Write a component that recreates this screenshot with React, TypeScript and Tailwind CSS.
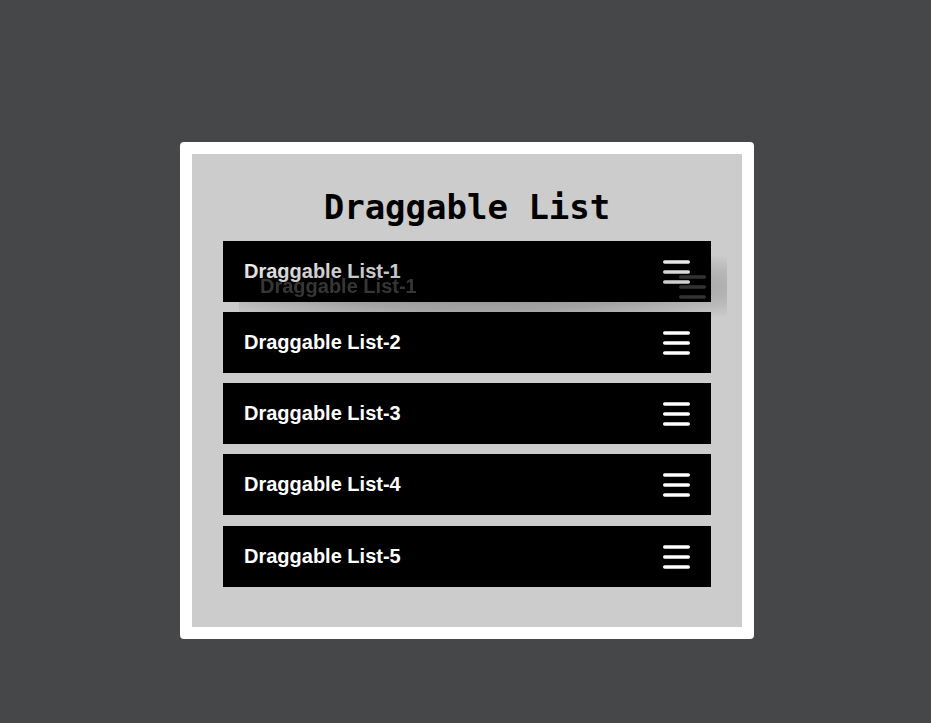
const items = ['Draggable List-1', 'Draggable List-2', 'Draggable List-3', 'Draggable List-4', 'Draggable List-5'];

function Bars({ color }: { color: string }) {
  return (
    <svg width="27" height="24" viewBox="0 0 27 24" fill="none">
      <g stroke={color} strokeWidth="3.4" strokeLinecap="round">
        <line x1="1.7" y1="2" x2="25.3" y2="2" />
        <line x1="1.7" y1="12" x2="25.3" y2="12" />
        <line x1="1.7" y1="22" x2="25.3" y2="22" />
      </g>
    </svg>
  );
}

function Row({ label, dragging, last }: { label: string; dragging?: boolean; last?: boolean }) {
  return (
    <div className={`relative h-[61px] bg-black flex items-center justify-between pl-[21px] pr-[21px] ${last ? 'mt-[1px]' : ''}`}>
      <span className="text-white text-[20px] leading-[22px] font-bold font-['Liberation_Sans',Arial,sans-serif] -mt-[2px]">{label}</span>
      <Bars color="#ffffff" />
      {dragging && (
        // ghost copy left behind by the drag
        <div className="absolute left-[16px] top-[15px] w-full h-[61px] flex items-center justify-between pl-[21px] pr-[21px] pointer-events-none bg-[radial-gradient(ellipse_at_center,rgba(0,0,0,0.3)_0%,rgba(0,0,0,0.2)_55%,rgba(0,0,0,0)_100%)]">
          <span className="text-[#363636] text-[20px] leading-[22px] font-bold font-['Liberation_Sans',Arial,sans-serif] blur-[0.4px] -mt-[2px]">{label}</span>
          <Bars color="#333333" />
        </div>
      )}
    </div>
  );
}

export default function App() {
  return (
    <div className="min-h-screen bg-[#464749] pl-[180px] pt-[142px]">
      <div className="w-[574px] bg-white rounded-[4px] p-[12px]">
        <div className="bg-[#cccccc] px-[31px] pt-[36px] pb-[40px]">
          <h1 className="text-center text-black text-[34px] leading-[34px] font-bold font-['DejaVu_Sans_Mono','Liberation_Mono',monospace] mb-[17px]">
            Draggable List
          </h1>
          <div className="flex flex-col gap-[10px]">
            {items.map((label, i) => (
              <Row key={label} label={label} dragging={i === 0} last={i === items.length - 1} />
            ))}
          </div>
        </div>
      </div>
    </div>
  );
}
